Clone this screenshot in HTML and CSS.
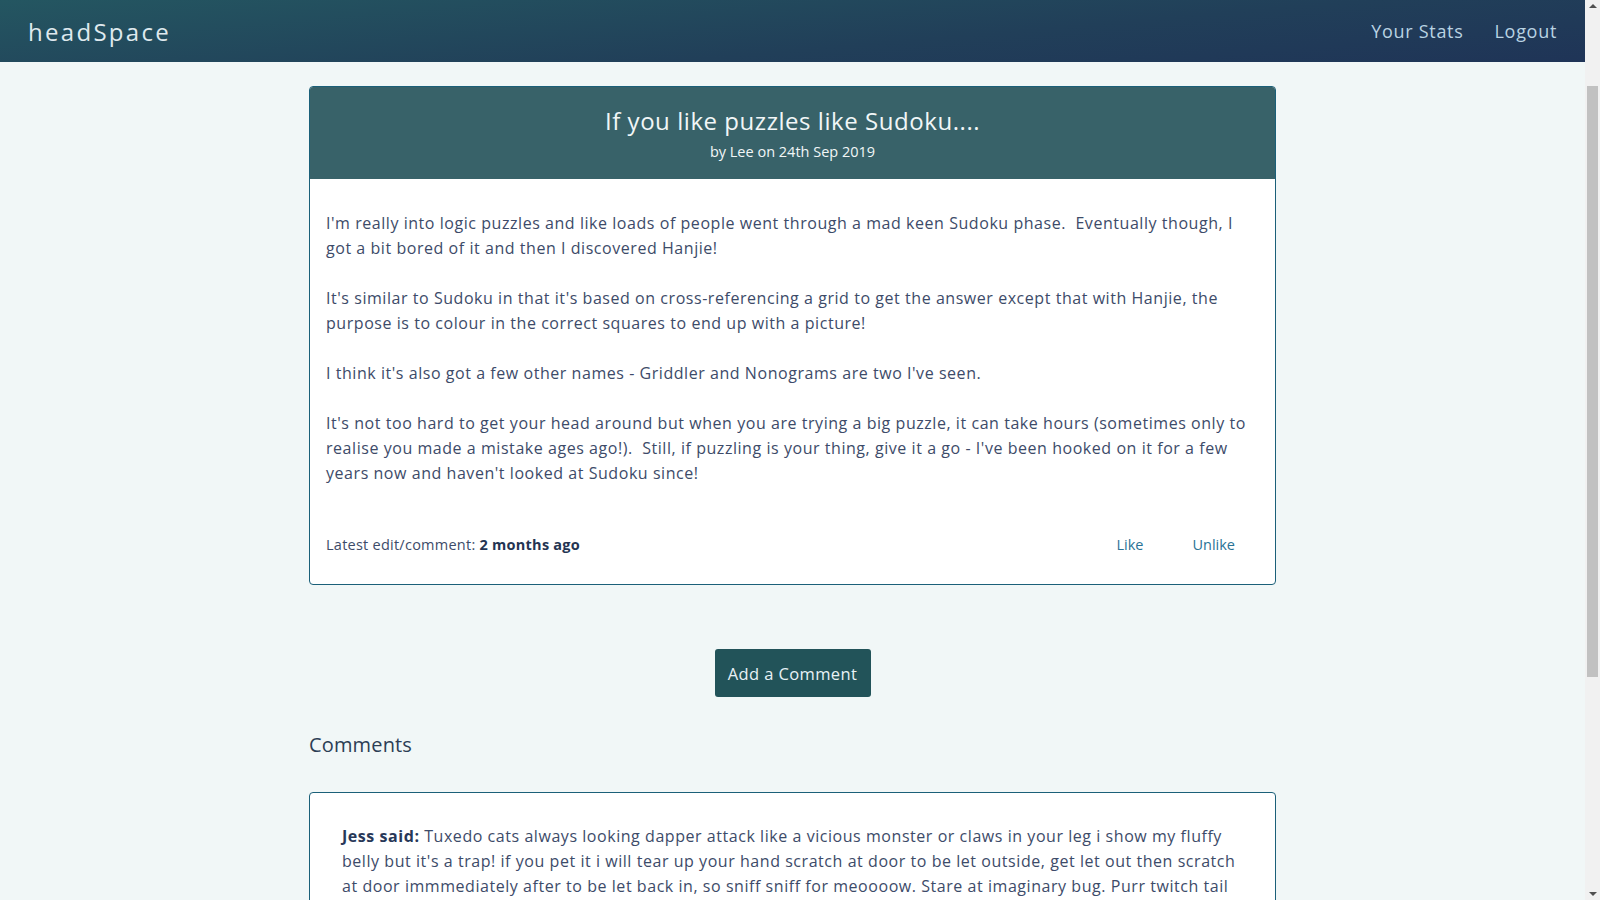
FILE: index.html
```html
<!DOCTYPE html>
<html lang="en">
<head>
<meta charset="utf-8">
<title>headSpace</title>
<link rel="stylesheet" href="styles.css">
</head>
<body>
<div class="page">
  <nav class="navbar">
    <a class="brand" href="#">headSpace</a>
    <div class="nav-links">
      <a href="#">Your Stats</a>
      <a href="#">Logout</a>
    </div>
  </nav>
  <main class="container">
    <article class="card">
      <header class="card-header">
        <h1 class="post-title">If you like puzzles like Sudoku....</h1>
        <div class="post-meta">by Lee on 24th Sep 2019</div>
      </header>
      <div class="card-body">
        <p>I'm really into logic puzzles and like loads of people went through a mad keen Sudoku phase.&nbsp; Eventually though, I got a bit bored of it and then I discovered Hanjie!</p>
        <p>It's similar to Sudoku in that it's based on cross-referencing a grid to get the answer except that with Hanjie, the purpose is to colour in the correct squares to end up with a picture!</p>
        <p>I think it's also got a few other names - Griddler and Nonograms are two I've seen.</p>
        <p>It's not too hard to get your head around but when you are trying a big puzzle, it can take hours (sometimes only to realise you made a mistake ages ago!).&nbsp; Still, if puzzling is your thing, give it a go - I've been hooked on it for a few years now and haven't looked at Sudoku since!</p>
        <div class="card-footer">
          <div class="latest">Latest edit/comment: <strong>2 months ago</strong></div>
          <div class="actions">
            <a href="#">Like</a>
            <a href="#">Unlike</a>
          </div>
        </div>
      </div>
    </article>

    <div class="btn-row">
      <a class="btn" href="#">Add a Comment</a>
    </div>

    <h2 class="comments-title">Comments</h2>

    <section class="card comment">
      <p><strong>Jess said:</strong> Tuxedo cats always looking dapper attack like a vicious monster or claws in your leg i show my fluffy belly but it's a trap! if you pet it i will tear up your hand scratch at door to be let outside, get let out then scratch at door immmediately after to be let back in, so sniff sniff for meoooow. Stare at imaginary bug. Purr twitch tail in permanent irritation lick the other cats. Chase laser knock over christmas tree, sleep on keyboard, and then cats take over the world. Hide when guests come over meow loudly just to annoy owners.</p>
    </section>
  </main>
</div>
<div class="scrollbar" aria-hidden="true">
  <span class="arrow up"></span>
  <span class="thumb"></span>
  <span class="arrow down"></span>
</div>
</body>
</html>
```

FILE: styles.css
```css
* { box-sizing: border-box; }

html, body {
  margin: 0;
  padding: 0;
}

body {
  background: #f1f7f7;
  font-family: "Open Sans", "Noto Sans", sans-serif;
  color: #3d4b69;
  font-size: 16px;
  line-height: 25px;
}

a { text-decoration: none; }

.page {
  margin-right: 15px;
}

.navbar {
  height: 62px;
  display: flex;
  align-items: center;
  justify-content: space-between;
  padding: 0 28px;
  background: linear-gradient(175deg, #245661 0%, #213f59 60%, #1f3457 100%);
}

.brand {
  color: #dfe9ee;
  font-size: 24px;
  letter-spacing: 2.3px;
  font-weight: 400;
}

.nav-links {
  display: flex;
  gap: 31px;
}

.nav-links a {
  color: #b9d3e3;
  font-size: 18px;
  letter-spacing: 0.7px;
}

.container {
  width: 967px;
  margin: 24px auto 0;
  padding-bottom: 60px;
}

.card {
  background: #fff;
  border: 1px solid #1b6079;
  border-radius: 4px;
  overflow: hidden;
}

.card-header {
  background: #386269;
  color: #f1f6f7;
  text-align: center;
  padding: 19px 16px 16px;
}

.post-title {
  margin: 0;
  font-size: 24px;
  line-height: 30px;
  font-weight: 400;
  letter-spacing: 0.55px;
}

.post-meta {
  margin-top: 5px;
  font-size: 14.5px;
  line-height: 22px;
}

.card-body {
  padding: 32px 20px 28px 16px;
  letter-spacing: 0.55px;
}

.card-body p {
  margin: 0 0 25px;
}

.card-body p:last-of-type { margin-bottom: 0; }

.card-footer {
  margin-top: 48px;
  display: flex;
  justify-content: space-between;
  align-items: center;
  font-size: 14.5px;
  line-height: 22px;
  letter-spacing: 0.25px;
}

.card-footer strong {
  color: #243452;
  font-weight: 700;
}

.actions {
  display: flex;
  gap: 49px;
  padding-right: 20px;
  letter-spacing: 0;
}

.actions a {
  color: #2a7396;
}

.btn-row {
  display: flex;
  justify-content: center;
  margin-top: 64px;
}

.btn {
  display: inline-flex;
  align-items: center;
  justify-content: center;
  width: 156px;
  height: 48px;
  background: #225359;
  color: #e8f2f6;
  border-radius: 3px;
  font-size: 16.5px;
  letter-spacing: 0.4px;
}

.comments-title {
  margin: 34px 0 33px;
  font-size: 20px;
  line-height: 28px;
  font-weight: 400;
  color: #2c3e55;
  letter-spacing: 0.15px;
}

.comment {
  padding: 31px 32px 31px;
  letter-spacing: 0.55px;
}

.comment p { margin: 0; }

.comment strong {
  color: #283858;
  font-weight: 700;
}

/* static replica of the window scrollbar */
.scrollbar {
  position: fixed;
  top: 0;
  right: 0;
  width: 15px;
  height: 100vh;
  background: #f1f1f1;
}

.thumb {
  position: absolute;
  left: 2px;
  width: 11px;
  top: 86px;
  height: 591px;
  background: #c1c1c1;
}

.arrow {
  position: absolute;
  left: 4px;
  width: 0;
  height: 0;
  border-left: 4px solid transparent;
  border-right: 4px solid transparent;
}

.arrow.up {
  top: 4px;
  border-bottom: 4px solid #505050;
}

.arrow.down {
  bottom: 4px;
  border-top: 4px solid #505050;
}
```
